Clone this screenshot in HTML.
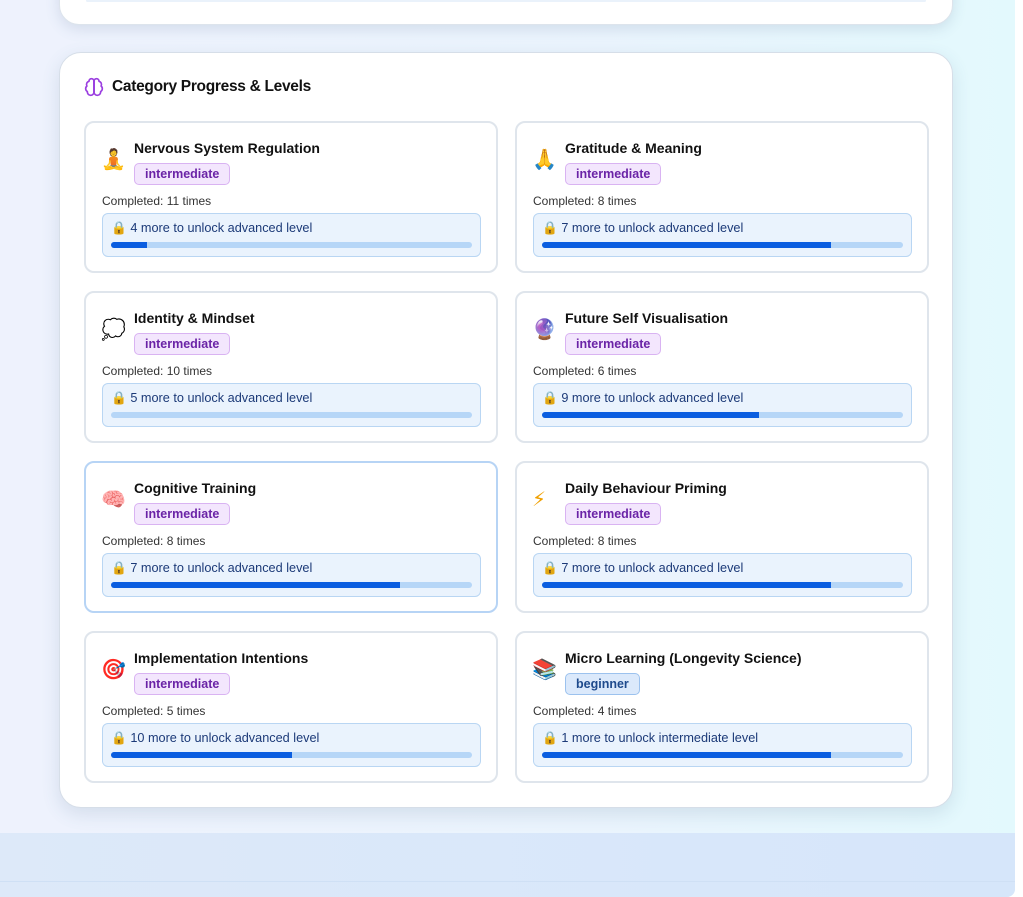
<!DOCTYPE html>
<html><head><meta charset="utf-8"><style>
*{box-sizing:border-box;margin:0;padding:0}
body{width:1023px;height:897px;overflow:hidden;background:#fff;font-family:"Liberation Sans","DejaVu Sans",sans-serif;position:relative}
.bg{position:absolute;left:0;top:0;width:1015px;height:897px;background:linear-gradient(90deg,#eef2fd,#eaf4fd 60%,#e3f9fd);border-radius:0 0 8px 0}
.foot{position:absolute;left:0;top:833px;width:1015px;height:64px;background:linear-gradient(90deg,#dde9f9,#d6e6fa);border-radius:0 0 8px 0}
.foot:after{content:"";position:absolute;left:0;right:0;top:48px;height:1px;background:#cfe0f5}
.top{position:absolute;left:59px;top:-40px;width:894px;height:65px;background:#fff;border-radius:20px;box-shadow:0 4px 14px rgba(60,90,130,.15);border:1px solid #dde4ec}
.top:after{content:"";position:absolute;left:26px;right:26px;top:38px;height:3px;background:#eaf2fb;border-radius:3px}
.main{position:absolute;left:59px;top:52px;width:894px;height:756px;background:#fff;border-radius:22px;border:1px solid #d6dee8;box-shadow:0 6px 18px rgba(60,90,130,.14)}
h2{position:absolute;left:52px;top:25px;font-size:15.5px;font-weight:bold;color:#111;letter-spacing:-.3px}
.bi{position:absolute;left:24px;top:24px}
.card{position:absolute;width:414px;height:152px;border:2px solid #dfe5ec;border-radius:10px;background:#fff}
.card.hl{border-color:#b7d4f5}
.ic{position:absolute;left:15px;top:25px;font-size:20px;line-height:24px}
.t{position:absolute;left:48px;top:17px;font-size:14px;font-weight:bold;color:#111}
.b{position:absolute;left:48px;top:40px;height:22px;padding:0 10px;border-radius:5px;border:1px solid #d9b3f2;background:#f3e6fd;color:#6a23a6;font-size:12.5px;font-weight:bold;line-height:20px}
.b.bl{border-color:#9cc2ee;background:#dbe9fb;color:#1e4a8c}
.c{position:absolute;left:16px;top:71px;font-size:12px;color:#333}
.p{position:absolute;left:16px;top:90px;width:379px;height:44px;border:1px solid #b9d6f3;background:#eaf3fd;border-radius:6px}
.p span{position:absolute;left:8px;top:7px;font-size:12.7px;color:#1c3a78}
.bar{position:absolute;left:8px;top:28px;width:361px;height:6px;background:#b6d6f7;border-radius:3px;overflow:hidden}
.bar i{display:block;height:6px;background:#0b5ee0}
</style></head><body>
<div class="bg"></div><div class="foot"></div>
<div class="top"></div>
<div class="main">
<svg class="bi" width="20" height="20" viewBox="0 0 24 24" fill="none" stroke="#9b3fe0" stroke-width="2" stroke-linecap="round" stroke-linejoin="round"><path d="M12 5a3 3 0 1 0-5.997.125 4 4 0 0 0-2.526 5.77 4 4 0 0 0 .556 6.588A4 4 0 1 0 12 18Z"/><path d="M12 5a3 3 0 1 1 5.997.125 4 4 0 0 1 2.526 5.77 4 4 0 0 1-.556 6.588A4 4 0 1 1 12 18Z"/><path d="M12 5v13"/></svg>
<h2>Category Progress &amp; Levels</h2>

<div class="card" style="left:24px;top:68px"><div class="ic">🧘</div><div class="t">Nervous System Regulation</div><div class="b">intermediate</div><div class="c">Completed: 11 times</div><div class="p"><span>🔒 4 more to unlock advanced level</span><div class="bar"><i style="width:10%"></i></div></div></div>
<div class="card" style="left:455px;top:68px"><div class="ic">🙏</div><div class="t">Gratitude &amp; Meaning</div><div class="b">intermediate</div><div class="c">Completed: 8 times</div><div class="p"><span>🔒 7 more to unlock advanced level</span><div class="bar"><i style="width:80%"></i></div></div></div>

<div class="card" style="left:24px;top:238px"><div class="ic">💭</div><div class="t">Identity &amp; Mindset</div><div class="b">intermediate</div><div class="c">Completed: 10 times</div><div class="p"><span>🔒 5 more to unlock advanced level</span><div class="bar"><i style="width:0%"></i></div></div></div>
<div class="card" style="left:455px;top:238px"><div class="ic">🔮</div><div class="t">Future Self Visualisation</div><div class="b">intermediate</div><div class="c">Completed: 6 times</div><div class="p"><span>🔒 9 more to unlock advanced level</span><div class="bar"><i style="width:60%"></i></div></div></div>

<div class="card hl" style="left:24px;top:408px"><div class="ic">🧠</div><div class="t">Cognitive Training</div><div class="b">intermediate</div><div class="c">Completed: 8 times</div><div class="p"><span>🔒 7 more to unlock advanced level</span><div class="bar"><i style="width:80%"></i></div></div></div>
<div class="card" style="left:455px;top:408px"><div class="ic" style="color:#f0a000">⚡</div><div class="t">Daily Behaviour Priming</div><div class="b">intermediate</div><div class="c">Completed: 8 times</div><div class="p"><span>🔒 7 more to unlock advanced level</span><div class="bar"><i style="width:80%"></i></div></div></div>

<div class="card" style="left:24px;top:578px"><div class="ic" style="color:#d22">🎯</div><div class="t">Implementation Intentions</div><div class="b">intermediate</div><div class="c">Completed: 5 times</div><div class="p"><span>🔒 10 more to unlock advanced level</span><div class="bar"><i style="width:50%"></i></div></div></div>
<div class="card" style="left:455px;top:578px"><div class="ic">📚</div><div class="t">Micro Learning (Longevity Science)</div><div class="b bl">beginner</div><div class="c">Completed: 4 times</div><div class="p"><span>🔒 1 more to unlock intermediate level</span><div class="bar"><i style="width:80%"></i></div></div></div>
</div>
</body></html>
